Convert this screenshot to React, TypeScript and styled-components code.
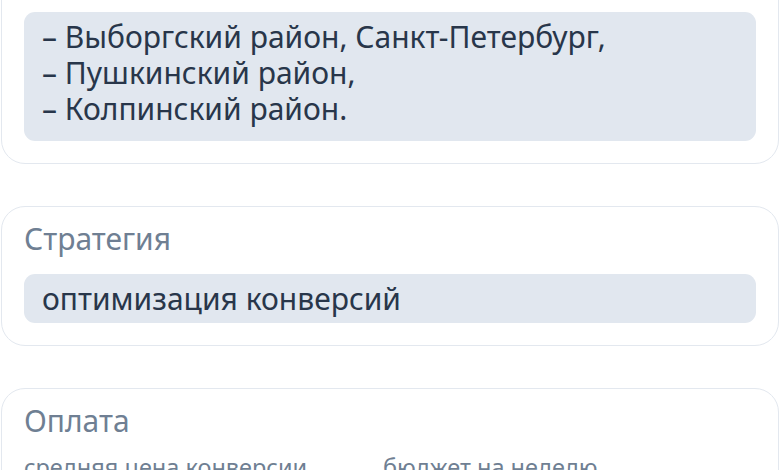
import React from "react";
import styled, { createGlobalStyle } from "styled-components";

const Global = createGlobalStyle`
  html, body { margin: 0; padding: 0; background: #ffffff; }
  body { font-family: "Noto Sans", "Open Sans", sans-serif; overflow: hidden; }
  * { box-sizing: border-box; }
`;

const Page = styled.div`
  display: flex;
  flex-direction: column;
  gap: 42px;
  padding: 0 1px;
  margin-top: -56px;
`;

const Card = styled.section<{ $gap?: number }>`
  border: 1px solid #e3e8ef;
  border-radius: 24px;
  padding: 14px 22px 22px 22px;
  display: flex;
  flex-direction: column;
  gap: ${(p) => p.$gap ?? 17}px;
`;

const Title = styled.h2`
  margin: 0;
  font-size: 30px;
  line-height: 36px;
  font-weight: 400;
  color: #6f7f93;
`;

const ValueBox = styled.div<{ $multi?: boolean }>`
  background: #e1e7ef;
  border-radius: 11px;
  padding: 7px 18px ${(p) => (p.$multi ? 14 : 6)}px 18px;
  font-size: 30px;
  line-height: 36px;
  color: #28364a;
`;

const Line = styled.div``;

const Columns = styled.div`
  display: grid;
  grid-template-columns: 359px 1fr;
`;

const Label = styled.div`
  font-size: 23.5px;
  line-height: 30px;
  color: #6f7f93;
`;

export default function App() {
  return (
    <>
      <Global />
      <Page>
        <Card>
          <Title>Регионы показа</Title>
          <ValueBox $multi>
            <Line>– Выборгский район, Санкт-Петербург,</Line>
            <Line>– Пушкинский район,</Line>
            <Line>– Колпинский район.</Line>
          </ValueBox>
        </Card>
        <Card>
          <Title>Стратегия</Title>
          <ValueBox>оптимизация конверсий</ValueBox>
        </Card>
        <Card $gap={13}>
          <Title>Оплата</Title>
          <Columns>
            <Label>средняя цена конверсии</Label>
            <Label>бюджет на неделю</Label>
          </Columns>
        </Card>
      </Page>
    </>
  );
}
